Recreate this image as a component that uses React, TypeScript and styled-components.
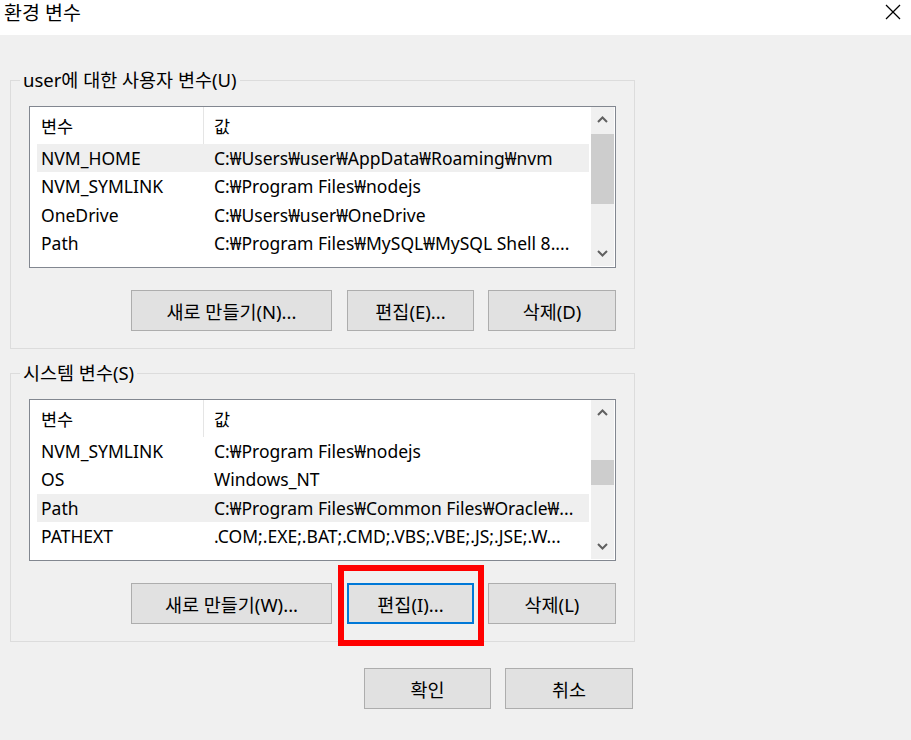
import styled, { createGlobalStyle } from 'styled-components';

const GlobalStyle = createGlobalStyle`
  body {
    margin: 0;
    background: #f0f0f0;
    font-family: "Noto Sans", "Noto Sans CJK KR", sans-serif;
    color: #000;
  }
  * { box-sizing: border-box; }
`;

type Variable = { name: string; value: string };

const userVars: Variable[] = [
  { name: 'NVM_HOME', value: 'C:₩Users₩user₩AppData₩Roaming₩nvm' },
  { name: 'NVM_SYMLINK', value: 'C:₩Program Files₩nodejs' },
  { name: 'OneDrive', value: 'C:₩Users₩user₩OneDrive' },
  { name: 'Path', value: 'C:₩Program Files₩MySQL₩MySQL Shell 8....' },
];

const systemVars: Variable[] = [
  { name: 'NVM_SYMLINK', value: 'C:₩Program Files₩nodejs' },
  { name: 'OS', value: 'Windows_NT' },
  { name: 'Path', value: 'C:₩Program Files₩Common Files₩Oracle₩...' },
  { name: 'PATHEXT', value: '.COM;.EXE;.BAT;.CMD;.VBS;.VBE;.JS;.JSE;.W...' },
];

const Window = styled.div`
  width: 911px;
  height: 740px;
  background: #f0f0f0;
  overflow: hidden;
`;

const TitleBar = styled.div`
  height: 35px;
  background: #fff;
  display: flex;
  justify-content: space-between;
  align-items: flex-start;
  padding: 2px 10px 0 4px;
`;

const Title = styled.span`
  font-size: 19.5px;
  line-height: 22px;
`;

const CloseButton = styled.div`
  padding-top: 2px;
  display: flex;
`;

const Body = styled.div`
  padding: 35px 0 0 10px;
`;

const GroupBox = styled.fieldset<{ $gap?: number }>`
  width: 625px;
  margin: ${(p) => p.$gap ?? 0}px 0 0 0;
  padding: 0 18px 17px 18px;
  border: 1px solid #dcdcdc;
`;

const Legend = styled.legend`
  margin-left: -9px;
  padding: 0 3px;
  font-size: 18.5px;
  line-height: 20px;
`;

const ListBox = styled.div`
  margin-top: 16px;
  width: 587px;
  height: 162px;
  border: 1px solid #828790;
  background: #fff;
  padding: 0 1px 1px 0;
  display: flex;
  overflow: hidden;
`;

const Table = styled.div`
  flex: 1;
  display: flex;
  flex-direction: column;
`;

const Header = styled.div`
  height: 37px;
  display: grid;
  grid-template-columns: 174px 1fr;
  font-size: 17.5px;
`;

const HeaderCell = styled.div<{ $divider?: boolean }>`
  display: flex;
  align-items: center;
  padding-left: ${(p) => (p.$divider ? 11 : 10)}px;
  border-right: ${(p) => (p.$divider ? '1px solid #e5e5e5' : 'none')};
`;

const Row = styled.div<{ $selected?: boolean }>`
  height: 28.3px;
  margin: 0 2px 0 7px;
  padding-left: 4px;
  display: grid;
  grid-template-columns: 173px 1fr;
  align-items: center;
  font-size: 17.5px;
  white-space: nowrap;
  overflow: hidden;
  background: ${(p) => (p.$selected ? '#efefef' : 'transparent')};
`;

const Scrollbar = styled.div`
  width: 23px;
  background: #f0f0f0;
  display: flex;
  flex-direction: column;
`;

const ArrowButton = styled.div`
  height: 25px;
  display: flex;
  align-items: center;
  justify-content: center;
`;

const Track = styled.div`
  flex: 1;
`;

const Thumb = styled.div<{ $top: number; $height: number }>`
  margin-top: ${(p) => p.$top}px;
  height: ${(p) => p.$height}px;
  background: #cdcdcd;
`;

const ButtonRow = styled.div<{ $top: number }>`
  margin-top: ${(p) => p.$top}px;
  display: flex;
  justify-content: flex-end;
`;

const Button = styled.button<{ $width: number; $focused?: boolean; $gap?: number }>`
  width: ${(p) => p.$width}px;
  height: 41px;
  margin-left: ${(p) => p.$gap ?? 0}px;
  background: #e1e1e1;
  border: ${(p) => (p.$focused ? '2px solid #0078d7' : '1px solid #adadad')};
  font-family: inherit;
  font-size: 18.5px;
  color: #000;
  padding: 0;
`;

const Highlight = styled.div`
  position: relative;
  display: flex;
  margin-left: 15px;
`;

const RedBox = styled.div`
  position: absolute;
  top: -18px;
  left: -9px;
  right: -10px;
  bottom: -22px;
  border: 6px solid #ff0000;
  pointer-events: none;
`;

const Footer = styled.div`
  width: 623px;
  margin-top: 26px;
  display: flex;
  justify-content: flex-end;
`;

const Chevron = ({ up }: { up?: boolean }) => (
  <svg width="11" height="7" viewBox="0 0 11 7">
    <polyline
      points={up ? '1,6 5.5,1.5 10,6' : '1,1 5.5,5.5 10,1'}
      fill="none"
      stroke="#606060"
      strokeWidth="2"
    />
  </svg>
);

const VariableList = ({
  vars,
  selected,
  thumbTop,
  thumbHeight,
}: {
  vars: Variable[];
  selected: number;
  thumbTop: number;
  thumbHeight: number;
}) => (
  <ListBox>
    <Table>
      <Header>
        <HeaderCell $divider>변수</HeaderCell>
        <HeaderCell>값</HeaderCell>
      </Header>
      {vars.map((v, i) => (
        <Row key={v.name} $selected={i === selected}>
          <span>{v.name}</span>
          <span>{v.value}</span>
        </Row>
      ))}
    </Table>
    <Scrollbar>
      <ArrowButton>
        <Chevron up />
      </ArrowButton>
      <Track>
        <Thumb $top={thumbTop} $height={thumbHeight} />
      </Track>
      <ArrowButton>
        <Chevron />
      </ArrowButton>
    </Scrollbar>
  </ListBox>
);

const App = () => (
  <Window>
    <GlobalStyle />
    <TitleBar>
      <Title>환경 변수</Title>
      <CloseButton>
        <svg width="16" height="16" viewBox="0 0 16 16">
          <line x1="1" y1="1" x2="15" y2="15" stroke="#000" strokeWidth="1.2" />
          <line x1="15" y1="1" x2="1" y2="15" stroke="#000" strokeWidth="1.2" />
        </svg>
      </CloseButton>
    </TitleBar>
    <Body>
      <GroupBox>
        <Legend>user에 대한 사용자 변수(U)</Legend>
        <VariableList vars={userVars} selected={0} thumbTop={2} thumbHeight={70} />
        <ButtonRow $top={22}>
          <Button $width={201}>새로 만들기(N)...</Button>
          <Button $width={127} $gap={15}>편집(E)...</Button>
          <Button $width={128} $gap={14}>삭제(D)</Button>
        </ButtonRow>
      </GroupBox>
      <GroupBox $gap={14}>
        <Legend>시스템 변수(S)</Legend>
        <VariableList vars={systemVars} selected={2} thumbTop={35} thumbHeight={25} />
        <ButtonRow $top={22}>
          <Button $width={201}>새로 만들기(W)...</Button>
          <Highlight>
            <Button $width={127} $focused>
              편집(I)...
            </Button>
            <RedBox />
          </Highlight>
          <Button $width={128} $gap={14}>삭제(L)</Button>
        </ButtonRow>
      </GroupBox>
      <Footer>
        <Button $width={127}>확인</Button>
        <Button $width={128} $gap={14}>취소</Button>
      </Footer>
    </Body>
  </Window>
);

export default App;
